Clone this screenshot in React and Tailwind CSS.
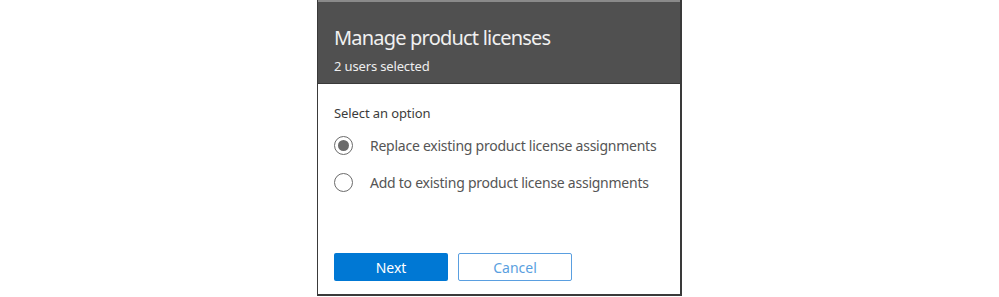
export default function App() {
  const font = { fontFamily: '"Segoe UI", "Noto Sans", "Open Sans", sans-serif' };
  return (
    <div className="w-[999px] h-[297px] bg-white flex justify-center" style={font}>
      <div className="w-[365px] h-[296px] flex flex-col border-l-[1.5px] border-r-2 border-b-2 border-[#3a3a3a] bg-white">
        <div className="h-[2px] bg-[#8a8a8a]" />
        <div className="h-[82px] bg-[#505050] border-b border-[#3a3a3a] px-4 pt-[22px]">
          <div className="text-[20px] leading-[28px] text-[#f0f0f0] tracking-[-0.8px] whitespace-nowrap">Manage product licenses</div>
          <div className="text-[13px] leading-[18px] text-[#eeeeee] mt-[5px] tracking-[-0.15px] whitespace-nowrap">2 users selected</div>
        </div>
        <div className="flex-1 flex flex-col px-4 pt-[20px] pb-[13px]">
          <div className="text-[13px] leading-[18px] text-[#3c3c3c] tracking-[-0.1px] whitespace-nowrap">Select an option</div>
          <div className="flex items-center mt-[13px] h-[20px]">
            <div className="w-[19px] h-[19px] shrink-0 rounded-full border-[1.5px] border-[#6b6b6b] flex items-center justify-center">
              <div className="w-[11px] h-[11px] rounded-full bg-[#6b6b6b]" />
            </div>
            <span className="ml-[17px] text-[14px] text-[#555555] tracking-[-0.25px] whitespace-nowrap">Replace existing product license assignments</span>
          </div>
          <div className="flex items-center mt-[17px] h-[20px]">
            <div className="w-[19px] h-[19px] shrink-0 rounded-full border-[1.5px] border-[#6b6b6b]" />
            <span className="ml-[17px] text-[14px] text-[#555555] tracking-[-0.25px] whitespace-nowrap">Add to existing product license assignments</span>
          </div>
          <div className="mt-auto flex gap-[10px]">
            <button className="w-[114px] h-[28px] bg-[#0078d4] text-white text-[14px] rounded-[2px]">Next</button>
            <button className="w-[114px] h-[28px] border border-[#5a9fe0] text-[#5a9fe0] text-[14px] bg-white rounded-[2px]">Cancel</button>
          </div>
        </div>
      </div>
    </div>
  );
}
